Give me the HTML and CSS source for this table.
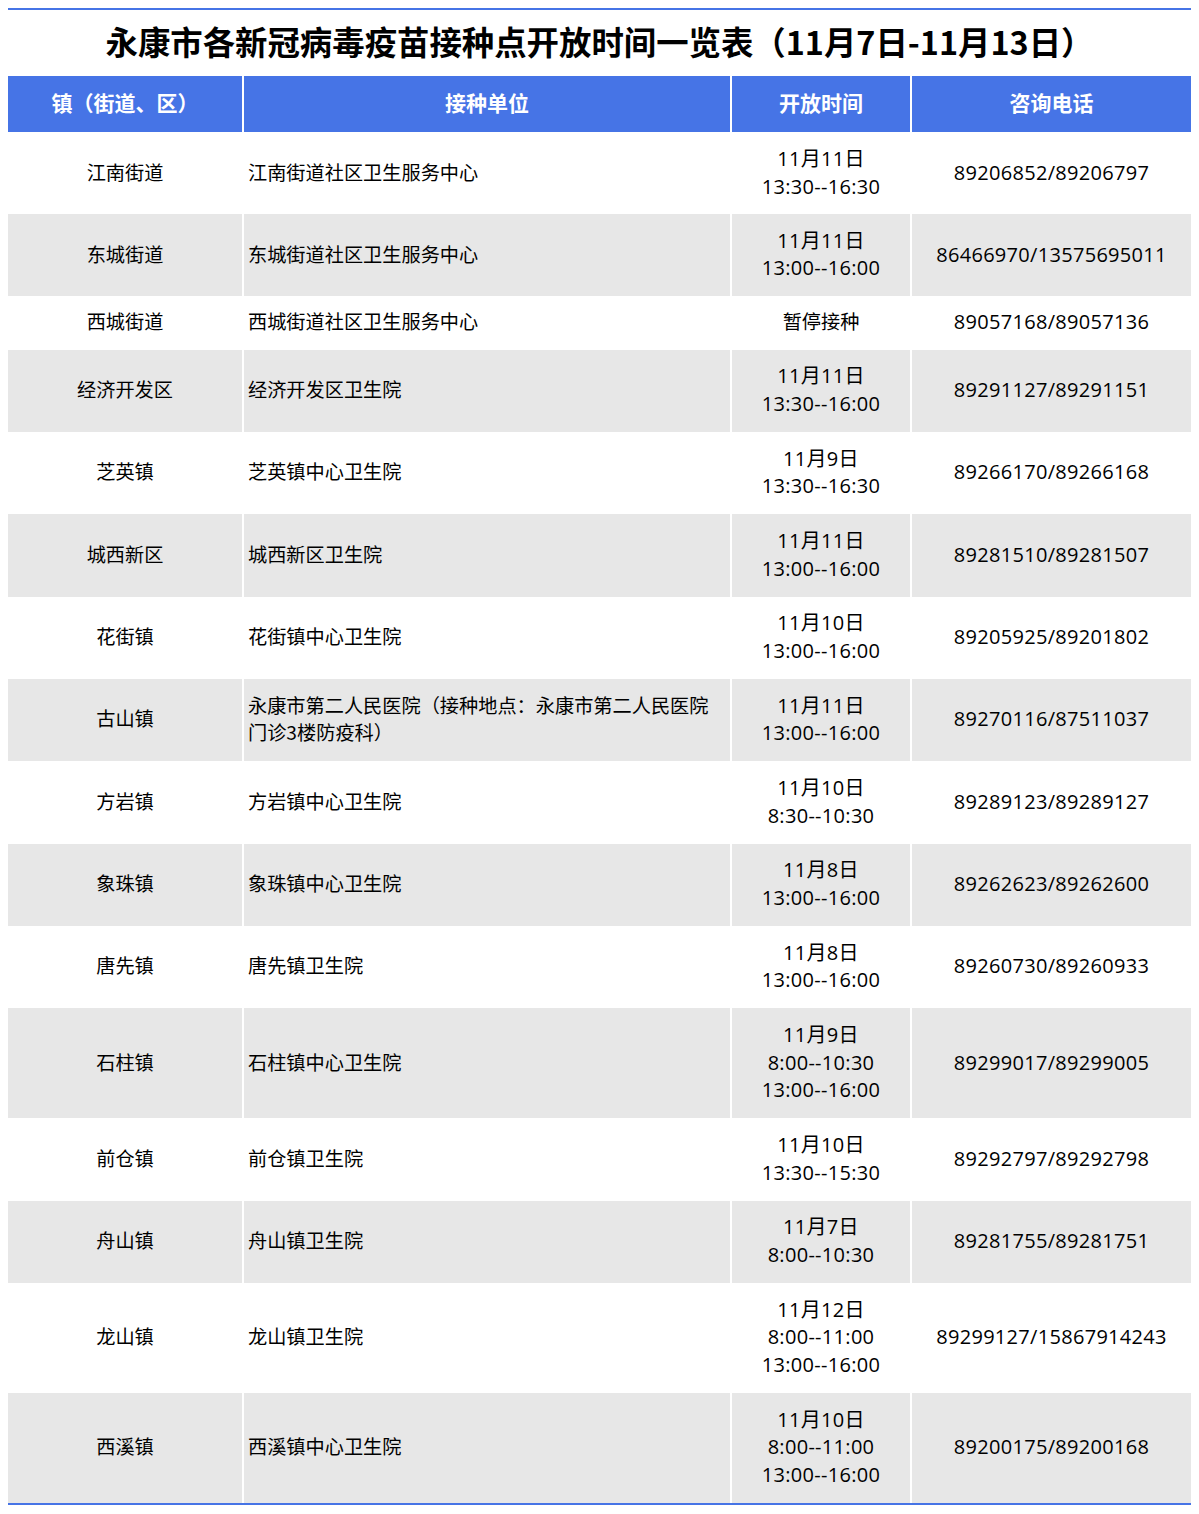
FILE: index.html
```html
<!DOCTYPE html>
<html lang="zh-CN">
<head>
<meta charset="utf-8">
<title>永康市各新冠病毒疫苗接种点开放时间一览表</title>
<link rel="stylesheet" href="styles.css">
</head>
<body>
<div class="sheet">
  <h1 class="title">永康市各新冠病毒疫苗接种点开放时间一览表（11月7日-11月13日）</h1>
  <div class="row head">
    <div class="cell c">镇（街道、区）</div>
    <div class="cell c">接种单位</div>
    <div class="cell c">开放时间</div>
    <div class="cell c">咨询电话</div>
  </div>
  <div class="row first">
    <div class="cell c">江南街道</div>
    <div class="cell l">江南街道社区卫生服务中心</div>
    <div class="cell c n"><div class="ln">11月11日</div><div class="ln">13:30--16:30</div></div>
    <div class="cell c n"><div class="ln">89206852/89206797</div></div>
  </div>
  <div class="row alt">
    <div class="cell c">东城街道</div>
    <div class="cell l">东城街道社区卫生服务中心</div>
    <div class="cell c n"><div class="ln">11月11日</div><div class="ln">13:00--16:00</div></div>
    <div class="cell c n"><div class="ln">86466970/13575695011</div></div>
  </div>
  <div class="row single">
    <div class="cell c">西城街道</div>
    <div class="cell l">西城街道社区卫生服务中心</div>
    <div class="cell c">暂停接种</div>
    <div class="cell c n"><div class="ln">89057168/89057136</div></div>
  </div>
  <div class="row alt">
    <div class="cell c">经济开发区</div>
    <div class="cell l">经济开发区卫生院</div>
    <div class="cell c n"><div class="ln">11月11日</div><div class="ln">13:30--16:00</div></div>
    <div class="cell c n"><div class="ln">89291127/89291151</div></div>
  </div>
  <div class="row">
    <div class="cell c">芝英镇</div>
    <div class="cell l">芝英镇中心卫生院</div>
    <div class="cell c n"><div class="ln">11月9日</div><div class="ln">13:30--16:30</div></div>
    <div class="cell c n"><div class="ln">89266170/89266168</div></div>
  </div>
  <div class="row alt">
    <div class="cell c">城西新区</div>
    <div class="cell l">城西新区卫生院</div>
    <div class="cell c n"><div class="ln">11月11日</div><div class="ln">13:00--16:00</div></div>
    <div class="cell c n"><div class="ln">89281510/89281507</div></div>
  </div>
  <div class="row">
    <div class="cell c">花街镇</div>
    <div class="cell l">花街镇中心卫生院</div>
    <div class="cell c n"><div class="ln">11月10日</div><div class="ln">13:00--16:00</div></div>
    <div class="cell c n"><div class="ln">89205925/89201802</div></div>
  </div>
  <div class="row alt">
    <div class="cell c">古山镇</div>
    <div class="cell l">永康市第二人民医院（接种地点：永康市第二人民医院<br>门诊3楼防疫科）</div>
    <div class="cell c n"><div class="ln">11月11日</div><div class="ln">13:00--16:00</div></div>
    <div class="cell c n"><div class="ln">89270116/87511037</div></div>
  </div>
  <div class="row">
    <div class="cell c">方岩镇</div>
    <div class="cell l">方岩镇中心卫生院</div>
    <div class="cell c n"><div class="ln">11月10日</div><div class="ln">8:30--10:30</div></div>
    <div class="cell c n"><div class="ln">89289123/89289127</div></div>
  </div>
  <div class="row alt">
    <div class="cell c">象珠镇</div>
    <div class="cell l">象珠镇中心卫生院</div>
    <div class="cell c n"><div class="ln">11月8日</div><div class="ln">13:00--16:00</div></div>
    <div class="cell c n"><div class="ln">89262623/89262600</div></div>
  </div>
  <div class="row">
    <div class="cell c">唐先镇</div>
    <div class="cell l">唐先镇卫生院</div>
    <div class="cell c n"><div class="ln">11月8日</div><div class="ln">13:00--16:00</div></div>
    <div class="cell c n"><div class="ln">89260730/89260933</div></div>
  </div>
  <div class="row alt">
    <div class="cell c">石柱镇</div>
    <div class="cell l">石柱镇中心卫生院</div>
    <div class="cell c n"><div class="ln">11月9日</div><div class="ln">8:00--10:30</div><div class="ln">13:00--16:00</div></div>
    <div class="cell c n"><div class="ln">89299017/89299005</div></div>
  </div>
  <div class="row">
    <div class="cell c">前仓镇</div>
    <div class="cell l">前仓镇卫生院</div>
    <div class="cell c n"><div class="ln">11月10日</div><div class="ln">13:30--15:30</div></div>
    <div class="cell c n"><div class="ln">89292797/89292798</div></div>
  </div>
  <div class="row alt">
    <div class="cell c">舟山镇</div>
    <div class="cell l">舟山镇卫生院</div>
    <div class="cell c n"><div class="ln">11月7日</div><div class="ln">8:00--10:30</div></div>
    <div class="cell c n"><div class="ln">89281755/89281751</div></div>
  </div>
  <div class="row">
    <div class="cell c">龙山镇</div>
    <div class="cell l">龙山镇卫生院</div>
    <div class="cell c n"><div class="ln">11月12日</div><div class="ln">8:00--11:00</div><div class="ln">13:00--16:00</div></div>
    <div class="cell c n"><div class="ln">89299127/15867914243</div></div>
  </div>
  <div class="row alt">
    <div class="cell c">西溪镇</div>
    <div class="cell l">西溪镇中心卫生院</div>
    <div class="cell c n"><div class="ln">11月10日</div><div class="ln">8:00--11:00</div><div class="ln">13:00--16:00</div></div>
    <div class="cell c n"><div class="ln">89200175/89200168</div></div>
  </div>
</div>
</body>
</html>
```
FILE: styles.css
```css
html, body {
  margin: 0;
  padding: 0;
  background: #ffffff;
}
body {
  padding: 8px;
  font-family: "Noto Sans CJK SC", "Noto Sans", sans-serif;
  color: #000000;
}
.sheet {
  width: 1183px;
  border-top: 2px solid #4674e6;
  border-bottom: 2px solid #4674e6;
}
.title {
  margin: 0;
  height: 66px;
  padding-bottom: 4px;
  box-sizing: border-box;
  display: flex;
  align-items: center;
  justify-content: center;
  font-size: 32.4px;
  font-weight: 700;
  color: #000000;
  line-height: 1;
}
.row {
  display: grid;
  grid-template-columns: 234px 486px 178px 1fr;
  column-gap: 2px;
}
.cell {
  display: flex;
  flex-direction: column;
  justify-content: center;
  font-size: 19.2px;
  line-height: 27.75px;
  padding: 12.65px 0 14.2px;
  box-sizing: border-box;
  overflow: hidden;
}
.row.first .cell {
  padding-top: 12px;
  padding-bottom: 13.5px;
}
.row.single .cell {
  padding-top: 12px;
  padding-bottom: 13.5px;
}
.cell.c {
  text-align: center;
  align-items: center;
}
.cell.l {
  text-align: left;
  padding-left: 4px;
}
.cell.n {
  font-family: "Open Sans", "Noto Sans CJK SC", sans-serif;
  font-size: 20px;
  letter-spacing: 0.3px;
}
.ln {
  height: 27.75px;
  line-height: 27.75px;
  white-space: nowrap;
}
.row.alt .cell {
  background: #e7e7e7;
}
.row.head {
  margin-bottom: 1px;
}
.row.head .cell {
  background: #4674e6;
  color: #ffffff;
  font-weight: 700;
  font-size: 21px;
  height: 56px;
  padding: 0 0 2px;
}
```
